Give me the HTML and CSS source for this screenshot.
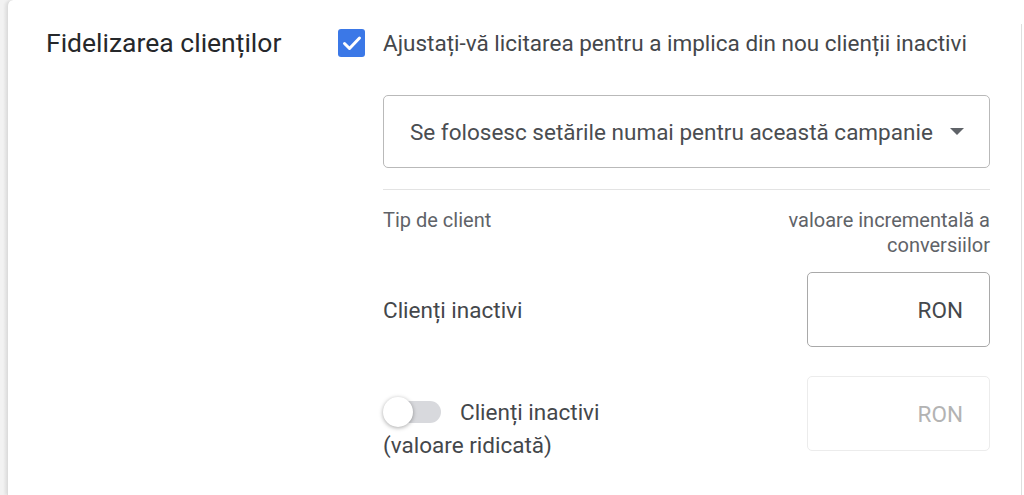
FILE: index.html
```html
<!DOCTYPE html>
<html lang="ro">
<head>
    <meta charset="UTF-8">
    <meta name="viewport" content="width=device-width, initial-scale=1">
    <title>Fidelizarea clienților</title>
    <link rel="stylesheet" href="styles.css">
</head>
<body>
<div class="card">
    <!-- Section title -->
    <div class="section-title">Fidelizarea clienților</div>

    <div class="section-body">
        <label class="check-row">
            <span class="checkbox">
                <svg viewBox="0 0 24 24" width="24" height="24"><path d="M4.5 12.5l5 5 10-10.5" fill="none" stroke="#fff" stroke-width="3" stroke-linecap="round" stroke-linejoin="round"/></svg>
            </span>
            <span class="check-label">Ajustați-vă licitarea pentru a implica din nou clienții inactivi</span>
        </label>

        <div class="options">
            <div class="select">
                <span>Se folosesc setările numai pentru această campanie</span>
                <span class="caret"></span>
            </div>

            <div class="divider"></div>

            <div class="table-head">
                <span>Tip de client</span>
                <span class="col-right">valoare incrementală a<br>conversiilor</span>
            </div>

            <div class="value-row">
                <span class="row-label">Clienți inactivi</span>
                <div class="money">RON</div>
            </div>

            <div class="value-row toggle-row">
                <div class="row-label multi">
                    <span class="toggle"><span class="knob"></span></span>Clienți inactivi<br>(valoare ridicată)
                </div>
                <div class="money disabled">RON</div>
            </div>
        </div>
    </div>

    <div class="rail"></div>
</div>
</body>
</html>
```

FILE: styles.css
```css
* { box-sizing: border-box; }
html, body { height: 100%; }
body {
  margin: 0;
  font-family: Roboto, "Noto Sans", sans-serif;
  background: linear-gradient(to right, #f2f2f2, #e4e4e4);
  color: #3c4043;
  overflow: hidden;
}
/* Card, cut off at the top */
.card {
  display: flex;
  height: 100%;
  margin-left: 7px;
  background: #fff;
  border-top-left-radius: 6px;
  box-shadow: -2px 0 3px rgba(0,0,0,0.08);
  border-left: 1px solid #dcdcdc;
}
.section-title {
  width: 330px;
  padding: 27px 0 0 38px;
  font-size: 26.5px;
  line-height: 32px;
  color: #26282b;
  flex: none;
}
.section-body {
  width: 652px;
  padding-top: 29px;
  flex: none;
}
.check-row {
  display: flex;
  align-items: center;
  gap: 18px;
  height: 28px;
}
.checkbox {
  width: 27px;
  height: 28px;
  border-radius: 3px;
  background: #3b78e7;
  display: flex;
  align-items: center;
  justify-content: center;
  flex: none;
}
.check-label {
  font-size: 22.5px;
  white-space: nowrap;
  color: #44474b;
}
.options {
  margin-left: 45px;
  padding-top: 38px;
}
.select {
  height: 73px;
  border: 1px solid #b9b9b9;
  border-radius: 5px;
  display: flex;
  align-items: center;
  justify-content: space-between;
  padding: 0 25px 0 26px;
  font-size: 22.5px;
  color: #4a4d51;
}
.caret {
  width: 0;
  height: 0;
  border-left: 7px solid transparent;
  border-right: 7px solid transparent;
  border-top: 7px solid #5f6368;
}
.divider {
  margin-top: 21px;
  height: 1px;
  background: #e3e3e3;
}
.table-head {
  display: flex;
  justify-content: space-between;
  margin-top: 18px;
  font-size: 20px;
  line-height: 25px;
  color: #5f6368;
}
.col-right { text-align: right; }
.value-row {
  display: flex;
  justify-content: space-between;
  align-items: center;
  margin-top: 14px;
}
.row-label { font-size: 22.5px; color: #44474b; }
.money {
  width: 183px;
  height: 75px;
  border: 1px solid #a9a9a9;
  border-radius: 5px;
  display: flex;
  align-items: center;
  justify-content: flex-end;
  padding-right: 26px;
  font-size: 22.5px;
  color: #45484c;
}
.money.disabled {
  border-color: #ececec;
  color: #b3b3b3;
}
.toggle-row {
  margin-top: 29px;
  align-items: flex-start;
}
.row-label.multi {
  line-height: 33px;
  padding-top: 20px;
}
.toggle {
  display: inline-block;
  position: relative;
  width: 52px;
  height: 22px;
  margin: 0 19px 0 6px;
  border-radius: 11px;
  background: #d8d9dd;
  vertical-align: -3px;
}
.knob {
  position: absolute;
  left: -6px;
  top: -4px;
  width: 30px;
  height: 30px;
  border-radius: 50%;
  background: #fff;
  box-shadow: 0 1px 4px rgba(0,0,0,0.35);
}
/* right edge line */
.rail {
  margin: 24px 0 0 auto;
  width: 3px;
  border-left: 1px solid #dedede;
  background: #fff;
}
```
